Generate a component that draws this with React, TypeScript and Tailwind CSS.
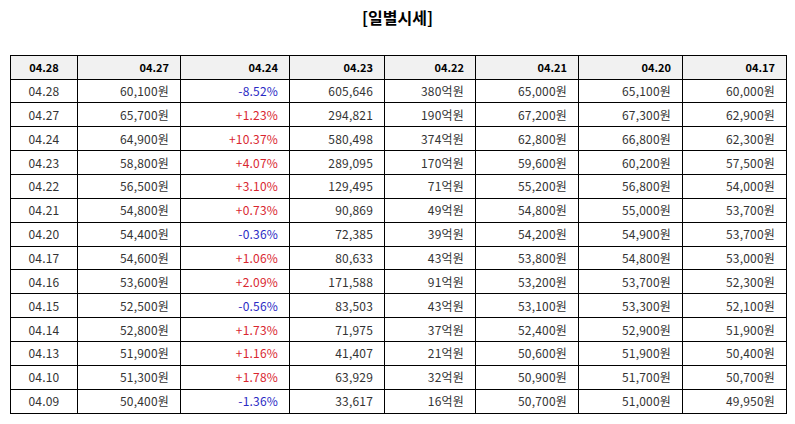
import React from "react";

const head = ["04.28", "04.27", "04.24", "04.23", "04.22", "04.21", "04.20", "04.17"];
const rows: string[][] = [
  ["04.28", "60,100원", "-8.52%", "605,646", "380억원", "65,000원", "65,100원", "60,000원"],
  ["04.27", "65,700원", "+1.23%", "294,821", "190억원", "67,200원", "67,300원", "62,900원"],
  ["04.24", "64,900원", "+10.37%", "580,498", "374억원", "62,800원", "66,800원", "62,300원"],
  ["04.23", "58,800원", "+4.07%", "289,095", "170억원", "59,600원", "60,200원", "57,500원"],
  ["04.22", "56,500원", "+3.10%", "129,495", "71억원", "55,200원", "56,800원", "54,000원"],
  ["04.21", "54,800원", "+0.73%", "90,869", "49억원", "54,800원", "55,000원", "53,700원"],
  ["04.20", "54,400원", "-0.36%", "72,385", "39억원", "54,200원", "54,900원", "53,700원"],
  ["04.17", "54,600원", "+1.06%", "80,633", "43억원", "53,800원", "54,800원", "53,000원"],
  ["04.16", "53,600원", "+2.09%", "171,588", "91억원", "53,200원", "53,700원", "52,300원"],
  ["04.15", "52,500원", "-0.56%", "83,503", "43억원", "53,100원", "53,300원", "52,100원"],
  ["04.14", "52,800원", "+1.73%", "71,975", "37억원", "52,400원", "52,900원", "51,900원"],
  ["04.13", "51,900원", "+1.16%", "41,407", "21억원", "50,600원", "51,900원", "50,400원"],
  ["04.10", "51,300원", "+1.78%", "63,929", "32억원", "50,900원", "51,700원", "50,700원"],
  ["04.09", "50,400원", "-1.36%", "33,617", "16억원", "50,700원", "51,000원", "49,950원"],
];
const widths = [67, 103, 109, 95, 91, 103, 104, 104];

export default function App() {
  return (
    <div
      className="w-[795px] h-[424px] bg-white text-[#222]"
      style={{ fontFamily: '"Noto Sans CJK KR", "Noto Sans", sans-serif' }}
    >
      <div className="pt-[5px] h-[55px] text-center text-[16px] font-bold text-black leading-[24px]">
        [일별시세]
      </div>
      <div className="px-[10px]">
        <table className="table-fixed border-collapse w-[776px] text-[12px] leading-none">
          <colgroup>
            {widths.map((w, i) => (
              <col key={i} style={{ width: w }} />
            ))}
          </colgroup>
          <thead>
            <tr className="h-[23.5px] bg-[#f1f1f1]">
              {head.map((h, i) => (
                <th
                  key={i}
                  className={`border border-black font-bold text-black text-[11px] p-0 ${
                    i === 0 ? "text-center" : "text-right pr-[11px]"
                  }`}
                >
                  {h}
                </th>
              ))}
            </tr>
          </thead>
          <tbody>
            {rows.map((r, ri) => (
              <tr key={ri} className="h-[23.86px]">
                {r.map((c, ci) => {
                  let color = "text-[#333]";
                  if (ci === 2) color = c.startsWith("-") ? "text-[#2a2ac4]" : "text-[#d9262f]";
                  return (
                    <td
                      key={ci}
                      className={`border border-black p-0 tracking-[0.2px] ${color} ${
                        ci === 0 ? "text-center" : "text-right pr-[11px]"
                      }`}
                    >
                      {c}
                    </td>
                  );
                })}
              </tr>
            ))}
          </tbody>
        </table>
      </div>
    </div>
  );
}
